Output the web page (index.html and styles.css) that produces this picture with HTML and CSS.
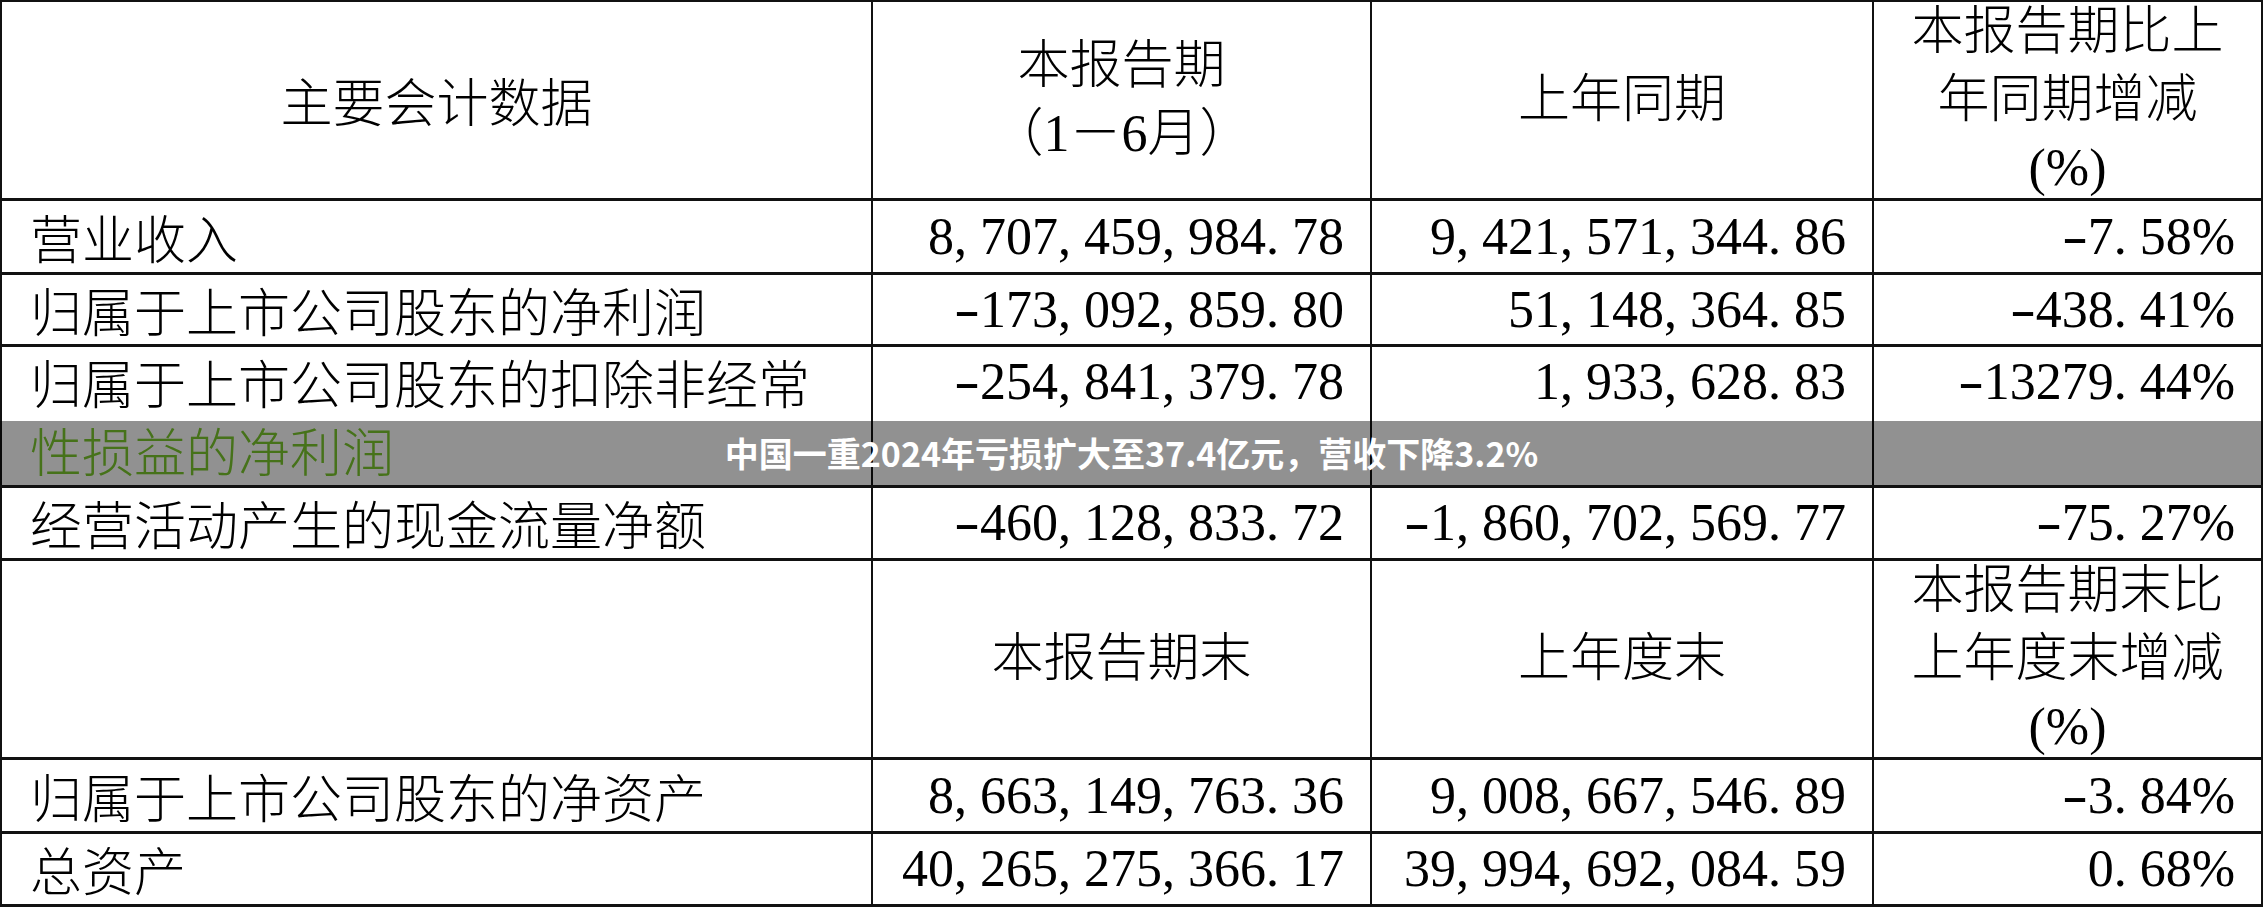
FILE: index.html
```html
<!DOCTYPE html>
<html lang="zh-CN">
<head>
<meta charset="utf-8">
<title>主要会计数据</title>
<link rel="stylesheet" href="styles.css">
</head>
<body>
<div class="sheet">
  <div class="grid">
    <div class="cell head cjk">主要会计数据</div>
    <div class="cell head">本报告期<br>（1－6月）</div>
    <div class="cell head">上年同期</div>
    <div class="cell head">本报告期比上<br>年同期增减<br>(%)</div>

    <div class="cell label">营业收入</div>
    <div class="cell num">8<span class="p">,</span>707<span class="p">,</span>459<span class="p">,</span>984<span class="p">.</span>78</div>
    <div class="cell num">9<span class="p">,</span>421<span class="p">,</span>571<span class="p">,</span>344<span class="p">.</span>86</div>
    <div class="cell num"><span class="m">-</span>7<span class="p">.</span>58%</div>

    <div class="cell label">归属于上市公司股东的净利润</div>
    <div class="cell num"><span class="m">-</span>173<span class="p">,</span>092<span class="p">,</span>859<span class="p">.</span>80</div>
    <div class="cell num">51<span class="p">,</span>148<span class="p">,</span>364<span class="p">.</span>85</div>
    <div class="cell num"><span class="m">-</span>438<span class="p">.</span>41%</div>

    <div class="cell label"><p class="wrap">归属于上市公司股东的扣除非经常<span class="under">性损益的净利润</span></p></div>
    <div class="cell num top"><span class="m">-</span>254<span class="p">,</span>841<span class="p">,</span>379<span class="p">.</span>78</div>
    <div class="cell num top">1<span class="p">,</span>933<span class="p">,</span>628<span class="p">.</span>83</div>
    <div class="cell num top"><span class="m">-</span>13279<span class="p">.</span>44%</div>

    <div class="cell label">经营活动产生的现金流量净额</div>
    <div class="cell num"><span class="m">-</span>460<span class="p">,</span>128<span class="p">,</span>833<span class="p">.</span>72</div>
    <div class="cell num"><span class="m">-</span>1<span class="p">,</span>860<span class="p">,</span>702<span class="p">,</span>569<span class="p">.</span>77</div>
    <div class="cell num"><span class="m">-</span>75<span class="p">.</span>27%</div>

    <div class="cell head"></div>
    <div class="cell head">本报告期末</div>
    <div class="cell head">上年度末</div>
    <div class="cell head">本报告期末比<br>上年度末增减<br>(%)</div>

    <div class="cell label">归属于上市公司股东的净资产</div>
    <div class="cell num">8<span class="p">,</span>663<span class="p">,</span>149<span class="p">,</span>763<span class="p">.</span>36</div>
    <div class="cell num">9<span class="p">,</span>008<span class="p">,</span>667<span class="p">,</span>546<span class="p">.</span>89</div>
    <div class="cell num"><span class="m">-</span>3<span class="p">.</span>84%</div>

    <div class="cell label">总资产</div>
    <div class="cell num">40<span class="p">,</span>265<span class="p">,</span>275<span class="p">,</span>366<span class="p">.</span>17</div>
    <div class="cell num">39<span class="p">,</span>994<span class="p">,</span>692<span class="p">,</span>084<span class="p">.</span>59</div>
    <div class="cell num">0<span class="p">.</span>68%</div>
  </div>
  <div class="banner">中国一重2024年亏损扩大至37.4亿元，营收下降3.2%</div>
</div>
</body>
</html>
```

FILE: styles.css
```css
* {
  box-sizing: border-box;
  margin: 0;
  padding: 0;
}

html, body {
  background: #fff;
}

body {
  width: 2263px;
  height: 907px;
  overflow: hidden;
  font-family: "Liberation Serif", "Noto Sans CJK SC", serif;
  color: #000;
}

.sheet {
  position: relative;
  width: 2263px;
  height: 907px;
}

.grid {
  display: grid;
  grid-template-columns: 871px 499px 502px 389px;
  grid-template-rows: 199px 74px 72px 141px 73px 199px 74px 73px;
  border-left: 2px solid #111;
  border-top: 2px solid #111;
}

.cell {
  display: flex;
  align-items: center;
  border-right: 2px solid #111;
  border-bottom: 3px solid #111;
  font-size: 52px;
  line-height: 68px;
  font-weight: 300;
}

.head {
  justify-content: center;
  text-align: center;
}

.cjk,
.label {
  font-family: "Noto Sans CJK SC", sans-serif;
}

.label {
  padding: 0 40px 0 28px;
}

.wrap {
  width: 100%;
}

.under {
  color: #7cc92e;
}

.num {
  justify-content: flex-end;
  padding-right: 26px;
  white-space: nowrap;
  font-weight: 400;
}

.top {
  align-items: flex-start;
  padding-top: 1px;
}

.p {
  margin-right: 0.25em;
}

.m {
  display: inline-block;
  width: 0.5em;
  text-align: center;
  transform: scaleX(1.5);
}

.banner {
  position: absolute;
  left: 0;
  top: 421px;
  width: 100%;
  height: 64px;
  display: flex;
  align-items: center;
  justify-content: center;
  background: rgba(0, 0, 0, 0.43);
  color: #fff;
  font-family: "Noto Sans CJK SC", sans-serif;
  font-weight: 700;
  font-size: 34px;
  line-height: 64px;
}
```
